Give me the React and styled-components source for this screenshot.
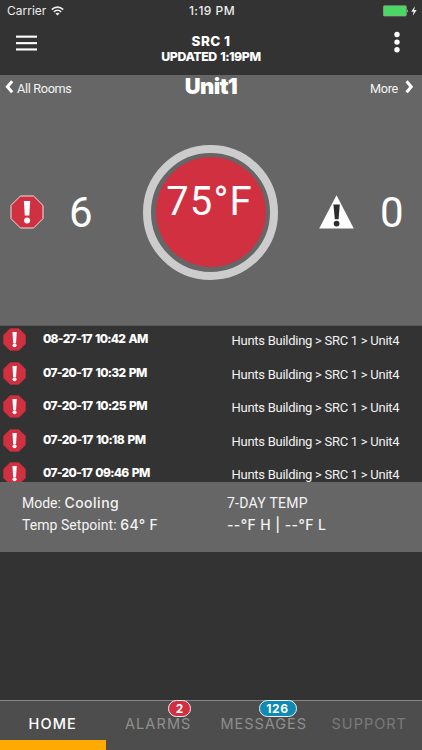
import React from "react";
import styled, { createGlobalStyle } from "styled-components";

const GlobalStyle = createGlobalStyle`
  *, *::before, *::after { box-sizing: border-box; }
  body { margin: 0; background: #333; }
`;

const Screen = styled.main`
  width: 422px;
  height: 750px;
  display: flex;
  flex-direction: column;
  overflow: hidden;
  background: #333333;
  color: #fff;
  font-family: Inter, "Liberation Sans", sans-serif;
  white-space: pre;
`;

const Label = styled.span`
  display: block;
  font-size: ${(p) => p.$size}px;
  font-weight: ${(p) => p.$weight || 400};
  letter-spacing: ${(p) => p.$track || 0}px;
  word-spacing: ${(p) => p.$word || 0}px;
  line-height: ${(p) => p.$line || 20}px;
`;

/* Body text and readings */
const Copy = styled(Label)`
  font-family: Roboto, "Liberation Sans", sans-serif;
`;

const StatusBar = styled.div`
  height: 22px;
  display: grid;
  grid-template-columns: 1fr auto 1fr;
  align-items: center;
  padding: 0 5px 0 7px;
  color: #ececec;
`;

const StatusSide = styled.div`
  display: flex;
  align-items: center;
  justify-content: ${(p) => (p.$end ? "flex-end" : "flex-start")};
  gap: ${(p) => (p.$end ? 2 : 5)}px;
`;

const Header = styled.header`
  height: 53px;
  display: grid;
  grid-template-columns: 48px 1fr 48px;
`;

const Titles = styled.div`
  padding-top: 11px;
  text-align: center;
`;

const IconButton = styled.button`
  height: 44px;
  padding: ${(p) => p.$pad};
  border: 0;
  background: none;
  color: #fff;
  display: flex;
  align-items: flex-start;
`;

const Hero = styled.section`
  height: 251px;
  background: #666666;
  border-bottom: 1px solid #5a5a5a;
  flex: none;
`;

const RoomNav = styled.nav`
  height: 27px;
  display: grid;
  grid-template-columns: 1fr auto 1fr;
`;

const NavLink = styled.a`
  display: flex;
  align-items: flex-start;
  justify-content: ${(p) => (p.$end ? "flex-end" : "flex-start")};
  gap: ${(p) => (p.$end ? 7 : 3)}px;
  padding: 4px ${(p) => (p.$end ? 8 : 0)}px 0 ${(p) => (p.$end ? 0 : 5)}px;
  color: #f4f4f4;
  svg { margin-top: 1px; }
`;

const Gauges = styled.div`
  height: 220px;
  display: grid;
  grid-template-columns: 143px 135px 1fr;
  align-items: center;
`;

const AlertCount = styled.div`
  display: flex;
  align-items: center;
  gap: ${(p) => p.$gap}px;
  padding-left: ${(p) => p.$left}px;
  svg { margin-bottom: 1px; }
`;

const Count = styled(Copy)`
  padding-top: 2px;
`;

const Ring = styled.div`
  width: 135px;
  height: 135px;
  border: 8px solid #cccccc;
  border-radius: 50%;
  padding: 4.5px;
`;

const Dial = styled.div`
  width: 110px;
  height: 110px;
  border-radius: 50%;
  background: #d13040;
  display: flex;
  justify-content: center;
  padding: 25px 2px 0 0;
`;

const AlarmList = styled.ul`
  list-style: none;
  margin: 0;
  padding: 0;
  height: 156px;
  flex: none;
  overflow: hidden;
`;

const AlarmRow = styled.li`
  height: 33.5px;
  display: grid;
  grid-template-columns: 43px 188.5px 1fr;
  align-items: start;
`;

const AlarmIcon = styled.span`
  display: block;
  padding: 2px 0 0 3px;
  svg { display: block; }
`;

const AlarmDate = styled(Label)`
  padding-top: 3.4px;
`;

const AlarmPlace = styled(Copy)`
  padding-top: 5px;
  color: #f2f2f2;
`;

const Info = styled.section`
  height: 70px;
  flex: none;
  background: #666666;
  display: grid;
  grid-template-columns: 205px 1fr;
  padding: 10px 0 0 22px;
  color: #f4f4f4;
`;

const InfoLine = styled.div`
  display: flex;
  height: 21.5px;
`;

const TabBar = styled.nav`
  height: 50px;
  margin-top: auto;
  display: grid;
  grid-template-columns: repeat(4, 1fr);
  background: #4d4d4d;
  border-top: 1px solid #858585;
`;

const Tab = styled.a`
  position: relative;
  display: flex;
  justify-content: center;
  padding-top: 13px;
  color: ${(p) => p.$color};
  border-bottom: ${(p) => (p.$active ? "10.5px solid #ffaa00" : "0")};
`;

const Badge = styled.span`
  position: absolute;
  top: -1px;
  left: ${(p) => p.$left}px;
  width: ${(p) => p.$width}px;
  height: 17px;
  border: 1px solid #f0f0f0;
  border-radius: 9px;
  background: ${(p) => p.$color};
  color: #fff;
  font-size: 12px;
  font-weight: 700;
  letter-spacing: ${(p) => p.$track || 0}px;
  line-height: 15px;
  text-align: center;
`;

const Wifi = () => (
  <svg width="13" height="10" viewBox="0 0 13 10" fill="none" stroke="#ececec" strokeWidth="1.6">
    <path d="M0.8 3.6C4 0.3 9 0.3 12.2 3.6" />
    <path d="M2.9 5.9C5 3.9 8 3.9 10.1 5.9" />
    <path d="M6.5 9.6L4.4 7.4C5.6 6.4 7.4 6.4 8.6 7.4Z" fill="#ececec" stroke="none" />
  </svg>
);

const Battery = () => (
  <svg width="26" height="12" viewBox="0 0 26 12">
    <rect x="0.4" y="0.8" width="22.9" height="10.2" rx="1" fill="#4bd763" stroke="#8fa893" strokeWidth="0.7" />
    <path d="M24.2 4.2Q25.8 6 24.2 7.8Z" fill="#d8d8d8" />
  </svg>
);

const Bolt = () => (
  <svg width="6" height="10" viewBox="0 0 6 10">
    <path d="M3.8 0.2L0.2 5.7H2.6L1.8 9.8L5.7 4.1H3.2Z" fill="#ececec" />
  </svg>
);

const Menu = () => (
  <svg width="21" height="16" viewBox="0 0 21 16" fill="#fff">
    <rect y="0.6" width="21" height="2.1" />
    <rect y="7.1" width="21" height="2.1" />
    <rect y="13.4" width="21" height="2.1" />
  </svg>
);

const Dots = () => (
  <svg width="6" height="22" viewBox="0 0 6 22" fill="#fff">
    <circle cx="3" cy="3.5" r="2.7" />
    <circle cx="3" cy="11.1" r="2.7" />
    <circle cx="3" cy="18.8" r="2.7" />
  </svg>
);

const Chevron = ({ right }) => (
  <svg width="9" height="14" viewBox="0 0 9 14" fill="none" stroke="#fff" strokeWidth="3">
    <path d={right ? "M1.6 1.2L6.2 6.7L1.6 12.2" : "M7.2 1.2L2.4 6.7L7.2 12.2"} />
  </svg>
);

const Octagon = ({ size, outlined }) => (
  <svg width={size} height={size} viewBox="0 0 34 34">
    <path
      d="M10.4 1H23.6L33 10.4V23.6L23.6 33H10.4L1 23.6V10.4Z"
      fill="#d13040"
      stroke={outlined ? "#f0dcdc" : "#d13040"}
      strokeWidth="1"
    />
    <path
      d={outlined ? "M13.9 6H20.2L19.3 20.5H14.8Z" : "M14 6H20.3L19.3 22H15Z"}
      fill="#fff"
    />
    <circle cx="17.1" cy="25.4" r="3" fill="#fff" />
  </svg>
);

const Warning = () => (
  <svg width="35" height="34" viewBox="0 0 35 34">
    <path d="M17.5 0.3L34.8 33.6H0.2Z" fill="#fff" />
    <path d="M14.4 9.6H20.8L19.6 24.2H15.8Z" fill="#2d2d2d" />
    <circle cx="17.6" cy="28.6" r="2.9" fill="#2d2d2d" />
  </svg>
);

const alarms = [
  { date: "08-27-17 10:42 AM", track: -0.7 },
  { date: "07-20-17 10:32 PM", track: -0.66 },
  { date: "07-20-17 10:25 PM", track: -0.64 },
  { date: "07-20-17 10:18 PM", track: -0.6 },
  { date: "07-20-17 09:46 PM", track: -0.68 },
];

export default function App() {
  return (
    <Screen>
      <GlobalStyle />
      <StatusBar>
        <StatusSide>
          <Label $size={12}>Carrier</Label>
          <Wifi />
        </StatusSide>
        <Label $size={12} $weight={500} $track={0.45}>1:19 PM</Label>
        <StatusSide $end>
          <Battery />
          <Bolt />
        </StatusSide>
      </StatusBar>
      <Header>
        <IconButton $pad="13px 0 0 16px" aria-label="Menu"><Menu /></IconButton>
        <Titles>
          <Label $size={13.5} $weight={800} $track={0.4} $line={16}>SRC 1</Label>
          <Label $size={12.3} $weight={800} $track={-0.4} $word={1} $line={16}>UPDATED 1:19PM</Label>
        </Titles>
        <IconButton $pad="9px 0 0 20px" aria-label="More options"><Dots /></IconButton>
      </Header>

      <Hero>
        <RoomNav>
          <NavLink>
            <Chevron />
            <Copy $size={12.7} $track={-0.33}>All Rooms</Copy>
          </NavLink>
          <Label $size={22} $weight={900} $track={-0.6} $line={23}>Unit1</Label>
          <NavLink $end>
            <Copy $size={12.7} $track={-0.3}>More</Copy>
            <Chevron right />
          </NavLink>
        </RoomNav>
        <Gauges>
          <AlertCount $left={10} $gap={25}>
            <Octagon size={34} outlined />
            <Count $size={42} $line={48}>6</Count>
          </AlertCount>
          <Ring>
            <Dial>
              <Copy $size={40} $track={1.1} $line={40}>75°F</Copy>
            </Dial>
          </Ring>
          <AlertCount $left={41} $gap={26}>
            <Warning />
            <Count $size={42} $line={48}>0</Count>
          </AlertCount>
        </Gauges>
      </Hero>

      <AlarmList>
        {alarms.map((a) => (
          <AlarmRow key={a.date}>
            <AlarmIcon><Octagon size={23} /></AlarmIcon>
            <AlarmDate $size={12} $weight={800} $track={a.track} $word={1.3}>{a.date}</AlarmDate>
            <AlarmPlace $size={13} $track={-0.27}>{"Hunts Building > SRC 1 > Unit4"}</AlarmPlace>
          </AlarmRow>
        ))}
      </AlarmList>

      <Info>
        <div>
          <InfoLine>
            <Copy $size={14} $line={22}>{"Mode: "}</Copy>
            <Label $size={14} $weight={500} $track={0.5} $line={22}>Cooling</Label>
          </InfoLine>
          <InfoLine>
            <Copy $size={14} $track={0.05} $line={22}>{"Temp Setpoint: "}</Copy>
            <Label $size={14} $weight={500} $track={0.4} $line={22}>64° F</Label>
          </InfoLine>
        </div>
        <div>
          <InfoLine><Copy $size={14} $track={0.25} $line={22}>7-DAY TEMP</Copy></InfoLine>
          <InfoLine><Label $size={14} $weight={500} $track={0.4} $line={22}>--°F H | --°F L</Label></InfoLine>
        </div>
      </Info>

      <TabBar>
        <Tab $color="#ffffff" $active><Label $size={14.5} $weight={500} $track={1.1}>HOME</Label></Tab>
        <Tab $color="#8f8f8f">
          <Label $size={14.5} $track={1.1}>ALARMS</Label>
          <Badge $left={62.5} $width={23} $color="#d13040">2</Badge>
        </Tab>
        <Tab $color="#8f8f8f">
          <Label $size={14.5} $track={0.95}>MESSAGES</Label>
          <Badge $left={47.5} $width={38} $color="#0f8ab3" $track={0.6}>126</Badge>
        </Tab>
        <Tab $color="#7a7a7a"><Label $size={14.5} $track={1}>SUPPORT</Label></Tab>
      </TabBar>
    </Screen>
  );
}
